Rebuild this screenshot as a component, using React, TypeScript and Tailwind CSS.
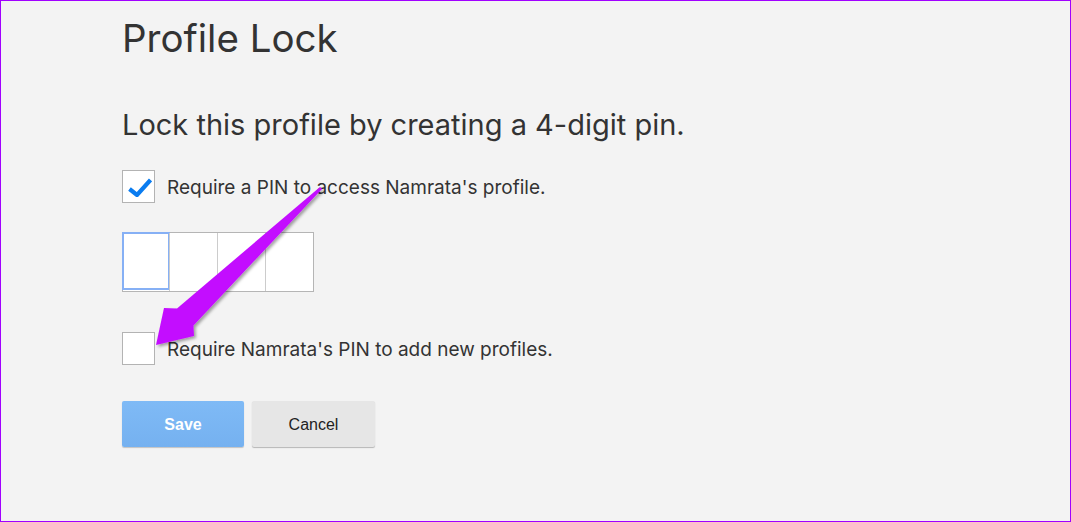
import React from "react";

// Tapered callout arrow pointing at the second checkbox
function PointerArrow() {
  return (
    <svg
      className="absolute inset-0 pointer-events-none"
      width="1071"
      height="522"
      viewBox="0 0 1071 522"
    >
      <defs>
        <filter id="arrowShadow" x="-20%" y="-20%" width="140%" height="140%">
          <feDropShadow dx="2" dy="2" stdDeviation="1.5" floodColor="#000" floodOpacity="0.35" />
        </filter>
      </defs>
      <polygon
        points="319,186 321,188 192.5,324.5 193,335 155,344 163,307 176,307.5"
        fill="#c30cff"
        filter="url(#arrowShadow)"
      />
    </svg>
  );
}

function Checkbox({ checked }: { checked?: boolean }) {
  return (
    <div className="w-[33px] h-[33px] shrink-0 border border-[#b3b3b3] bg-white flex items-center justify-center">
      {checked && (
        <svg width="26" height="20" viewBox="0 0 26 20">
          <path
            d="M3.5 12 L11 18 L24.5 3"
            fill="none"
            stroke="#0a7cf0"
            strokeWidth="4.2"
            strokeLinejoin="miter"
          />
        </svg>
      )}
    </div>
  );
}

function PinInput() {
  return (
    <div className="flex w-[192px] h-[60px] border border-[#b5b5b5] bg-white">
      <div className="w-[48px] h-full border-2 border-[#86b0f5] -m-px" />
      <div className="w-[48px] h-full border-l border-[#cccccc]" />
      <div className="w-[48px] h-full border-l border-[#cccccc]" />
      <div className="w-[48px] h-full border-l border-[#cccccc]" />
    </div>
  );
}

export default function App() {
  return (
    <div className="relative w-[1071px] h-[522px] overflow-hidden border border-[#a100ff] bg-[#f3f3f3] text-[#333333] font-['Inter',sans-serif]">
      <div className="pl-[121px] pt-[14px] flex flex-col items-start">
        <h1 className="text-[38.5px] leading-[46px] font-normal">Profile Lock</h1>

        <h2 className="mt-[46px] text-[29px] leading-[36px] font-normal">
          Lock this profile by creating a 4-digit pin.
        </h2>

        <div className="mt-[27px] flex items-center gap-[12px]">
          <Checkbox checked />
          <span className="text-[19px] leading-[28px] pt-[2px]">Require a PIN to access Namrata's profile.</span>
        </div>

        <div className="mt-[29px]">
          <PinInput />
        </div>

        <div className="mt-[40px] flex items-center gap-[12px]">
          <Checkbox />
          <span className="text-[19px] leading-[28px] pt-[2px]">Require Namrata's PIN to add new profiles.</span>
        </div>

        <div className="mt-[36px] flex gap-[8px]">
          <button className="w-[122px] h-[46px] rounded-[2px] bg-gradient-to-b from-[#7fbaf6] to-[#75b1f0] text-white text-[16px] font-bold font-['Liberation_Sans',sans-serif] pt-px shadow-[0_1px_1px_rgba(0,0,0,0.2)]">
            Save
          </button>
          <button className="w-[123px] h-[46px] rounded-[2px] bg-[#e6e6e6] text-[#222222] text-[16px] font-['Liberation_Sans',sans-serif] pt-px shadow-[0_1px_1px_rgba(0,0,0,0.25)]">
            Cancel
          </button>
        </div>
      </div>

      <PointerArrow />
    </div>
  );
}
